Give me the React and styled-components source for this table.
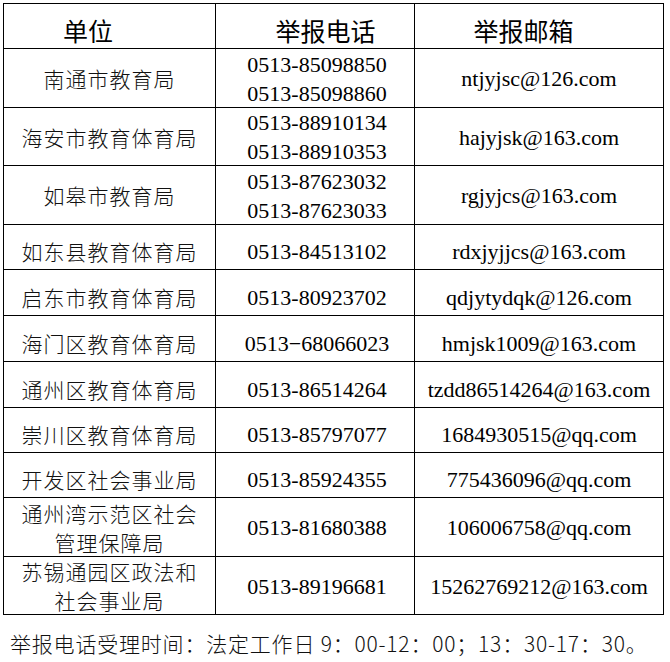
import React from 'react';
import styled, { createGlobalStyle } from 'styled-components';

const GlobalStyle = createGlobalStyle`
  body {
    margin: 0;
    background: #fff;
  }
`;

const Page = styled.div`
  padding: 3px 0 0 3px;
  width: 670px;
  height: 662px;
  box-sizing: border-box;
  background: #fff;
`;

const Table = styled.div`
  display: flex;
  flex-direction: column;
  gap: 1px;
  width: 661px;
  padding: 1px;
  box-sizing: border-box;
  background: #000;
`;

const Row = styled.div`
  display: grid;
  grid-template-columns: 211px 198px 248px;
  grid-template-rows: minmax(0, 1fr);
  gap: 1px;
  height: ${props => props.h}px;
  flex-shrink: 0;
`;

const Cell = styled.div`
  display: flex;
  flex-direction: column;
  align-items: center;
  justify-content: center;
  min-height: 0;
  background: #fff;
  color: #000;
  box-sizing: border-box;
  padding-top: ${props => (props.tall ? '1px' : '9px')};
`;

const HeadCell = styled(Cell)`
  padding: 8px ${props => props.pr || 0}px 0 ${props => props.pl || 0}px;
  font-family: 'Noto Sans CJK SC', sans-serif;
  font-size: 25px;
  line-height: 30px;
`;

const Unit = styled.span`
  display: block;
  font-family: 'Noto Sans CJK SC', sans-serif;
  font-size: 21px;
  font-weight: 300;
  letter-spacing: 1px;
  line-height: 29px;
  color: #111;
  white-space: nowrap;
`;

const Latin = styled.span`
  display: block;
  padding-left: ${props => props.pl || 0}px;
  font-family: 'Liberation Serif', 'Times New Roman', serif;
  font-size: 22px;
  line-height: 29px;
  white-space: nowrap;
`;

const Note = styled.p`
  margin: 14px 0 0 7px;
  font-family: 'Noto Sans CJK SC', sans-serif;
  font-size: 21px;
  font-weight: 300;
  letter-spacing: 0.8px;
  line-height: 28px;
  color: #111;
  white-space: nowrap;
`;

const rows = [
  { h: 58, unit: ['南通市教育局'], phones: ['0513-85098850', '0513-85098860'], mail: 'ntjyjsc@126.com' },
  { h: 57, unit: ['海安市教育体育局'], phones: ['0513-88910134', '0513-88910353'], mail: 'hajyjsk@163.com' },
  { h: 58, unit: ['如皋市教育局'], phones: ['0513-87623032', '0513-87623033'], mail: 'rgjyjcs@163.com' },
  { h: 44, unit: ['如东县教育体育局'], phones: ['0513-84513102'], mail: 'rdxjyjjcs@163.com' },
  { h: 45, unit: ['启东市教育体育局'], phones: ['0513-80923702'], mail: 'qdjytydqk@126.com' },
  { h: 45, unit: ['海门区教育体育局'], phones: ['0513\u221268066023'], mail: 'hmjsk1009@163.com' },
  { h: 45, unit: ['通州区教育体育局'], phones: ['0513-86514264'], mail: 'tzdd86514264@163.com' },
  { h: 44, unit: ['崇川区教育体育局'], phones: ['0513-85797077'], mail: '1684930515@qq.com' },
  { h: 44, unit: ['开发区社会事业局'], phones: ['0513-85924355'], mail: '775436096@qq.com' },
  { h: 58, unit: ['通州湾示范区社会', '管理保障局'], phones: ['0513-81680388'], mail: '106006758@qq.com' },
  { h: 57, unit: ['苏锡通园区政法和', '社会事业局'], phones: ['0513-89196681'], mail: '15262769212@163.com' },
];

const App = () => {
  return (
    <Page>
      <GlobalStyle />
      <Table>
        <Row h={44}>
          <HeadCell pr={43}>单位</HeadCell>
          <HeadCell pl={21}>举报电话</HeadCell>
          <HeadCell pr={31}>举报邮箱</HeadCell>
        </Row>
        {rows.map(row => {
          const tall = row.h > 50;
          return (
            <Row key={row.mail} h={row.h}>
              <Cell tall={tall}>
                {row.unit.map(line => (
                  <Unit key={line}>{line}</Unit>
                ))}
              </Cell>
              <Cell tall={tall}>
                {row.phones.map(phone => (
                  <Latin key={phone} pl={4}>
                    {phone}
                  </Latin>
                ))}
              </Cell>
              <Cell tall={tall}>
                <Latin>{row.mail}</Latin>
              </Cell>
            </Row>
          );
        })}
      </Table>
      <Note>举报电话受理时间：法定工作日 9：00-12：00；13：30-17：30。</Note>
    </Page>
  );
};

export default App;
